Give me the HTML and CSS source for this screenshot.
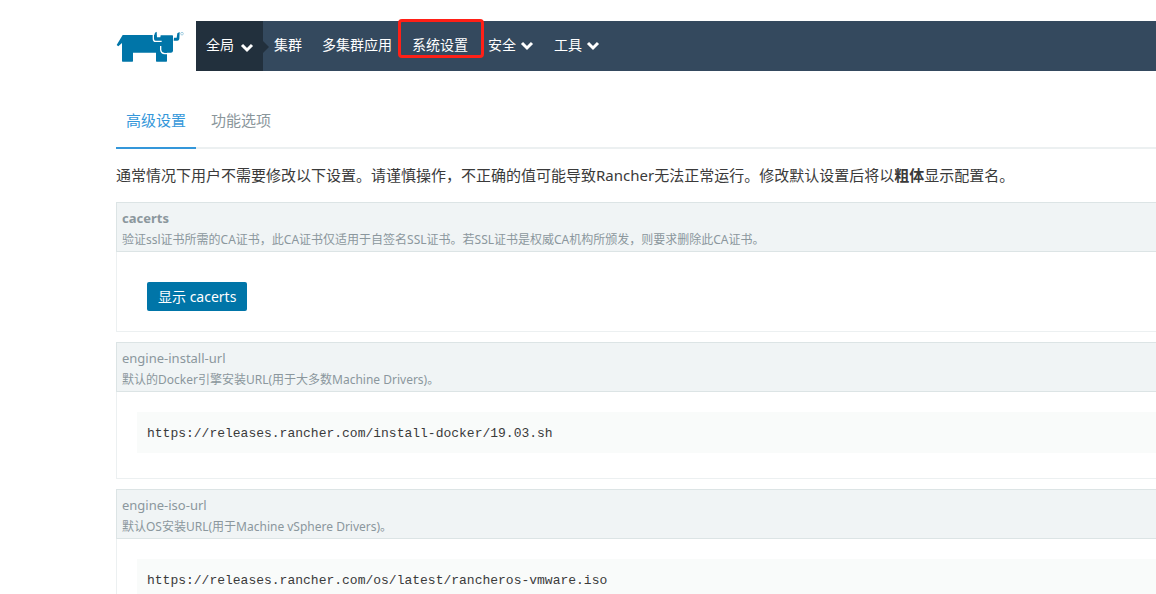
FILE: index.html
```
<!DOCTYPE html>
<html lang="zh-CN">
<head>
    <meta charset="UTF-8">
    <meta name="viewport" content="width=device-width, initial-scale=1.0">
    <title>Rancher - 系统设置</title>
    <link rel="stylesheet" href="styles.css">
</head>
<body>
    <header class="header">
        <a class="logo" href="#" aria-label="Rancher">
            <svg width="68" height="34" viewBox="30 45 204 102">
                <path fill="#0075a8" d="M50 60H145L147 53L152 50L153 67H163L164 61H199Q201 61 201 64V108Q200 113 195 113H183V138Q183 140 181 140H152Q150 140 150 138V113H81V138Q81 140 79 140H50Q48 140 48 138V84L37 94L32 90Z"/>
                <path fill="none" stroke="#fff" stroke-width="4" d="M142 55V71Q142 79 149 79H167M164 93V104Q165 115 176 116H184"/>
                <path fill="#0075a8" d="M204 68H212L214 55L221 51L220 72Q219 77 214 77H203Z"/>
                <circle cx="228" cy="56" r="4" fill="none" stroke="#7fb9d4" stroke-width="2"/>
            </svg>
        </a>
        <nav class="nav">
            <a class="nav-item scope" href="#">全局
                <svg class="chevron" width="14" height="10" viewBox="0 0 14 10"><path d="M2 2l5 5 5-5"/></svg>
            </a>
            <a class="nav-item" href="#">集群</a>
            <a class="nav-item" href="#">多集群应用</a>
            <a class="nav-item marked" href="#">系统设置</a>
            <a class="nav-item" href="#">安全
                <svg class="chevron" width="14" height="10" viewBox="0 0 14 10"><path d="M2 2l5 5 5-5"/></svg>
            </a>
            <a class="nav-item" href="#">工具
                <svg class="chevron" width="14" height="10" viewBox="0 0 14 10"><path d="M2 2l5 5 5-5"/></svg>
            </a>
        </nav>
    </header>

    <main class="content">
        <div class="tabs">
            <a class="tab active" href="#">高级设置</a>
            <a class="tab" href="#">功能选项</a>
        </div>

        <p class="intro">通常情况下用户不需要修改以下设置。请谨慎操作，不正确的值可能导致Rancher无法正常运行。修改默认设置后将以<b>粗体</b>显示配置名。</p>

        <section class="setting">
            <div class="setting-head">
                <h2 class="changed">cacerts</h2>
                <p>验证ssl证书所需的CA证书，此CA证书仅适用于自签名SSL证书。若SSL证书是权威CA机构所颁发，则要求删除此CA证书。</p>
            </div>
            <div class="setting-body hidden-value">
                <button type="button" class="btn">显示 cacerts</button>
            </div>
        </section>

        <section class="setting">
            <div class="setting-head">
                <h2>engine-install-url</h2>
                <p>默认的Docker引擎安装URL(用于大多数Machine Drivers)。</p>
            </div>
            <div class="setting-body">
                <pre>https://releases.rancher.com/install-docker/19.03.sh</pre>
            </div>
        </section>

        <section class="setting">
            <div class="setting-head">
                <h2>engine-iso-url</h2>
                <p>默认OS安装URL(用于Machine vSphere Drivers)。</p>
            </div>
            <div class="setting-body">
                <pre>https://releases.rancher.com/os/latest/rancheros-vmware.iso</pre>
            </div>
        </section>
    </main>
</body>
</html>
```
FILE: styles.css
```
* {
    box-sizing: border-box;
}
body {
    margin: 0;
    padding: 21px 0 0 116px;
    background: #fff;
    color: #3a3a3a;
    font-family: "Noto Sans", "Noto Sans CJK SC", sans-serif;
    font-size: 15px;
    height: 100vh;
    overflow: hidden;
}
a {
    text-decoration: none;
}
h2, p, pre {
    margin: 0;
}

/* header */
.header {
    display: flex;
}
.logo {
    width: 80px;
    padding-top: 9px;
}
.nav {
    display: flex;
    flex: 1;
    height: 50px;
    background: #34495e;
}
.nav-item {
    position: relative;
    display: flex;
    align-items: center;
    gap: 4px;
    padding: 0 10px 4px;
    color: #fff;
    font-size: 14px;
    white-space: nowrap;
}
.chevron {
    margin-top: 4px;
    fill: none;
    stroke: #fff;
    stroke-width: 3;
}
.scope {
    gap: 6px;
    margin-right: 1px;
    padding-right: 9px;
    background: #22303d;
}
.scope .chevron {
    margin-top: 8px;
}
.scope::after {
    content: "";
    position: absolute;
    left: 100%;
    top: 20px;
    border: 6px solid transparent;
    border-left-color: #22303d;
    border-right: 0;
}
.marked::after {
    content: "";
    position: absolute;
    top: -2px;
    left: -4px;
    right: -6px;
    height: 33px;
    border: 3px solid #ff2017;
    border-radius: 4px;
}

/* tabs */
.tabs {
    display: flex;
    gap: 5px;
    margin-top: 28px;
    border-bottom: 2px solid #ecf0f1;
}
.tab {
    height: 50px;
    margin-bottom: -2px;
    padding: 0 10px;
    color: #8a969b;
    line-height: 42px;
}
.tab.active {
    border-bottom: 2px solid #3497da;
    color: #3497da;
}

.intro {
    margin: 15px 0 16px;
    line-height: 22px;
    white-space: nowrap;
}

/* settings */
.setting {
    margin-bottom: 10px;
    border: 1px solid #ecf0f1;
    border-top: 0;
    border-right: 0;
}
.setting-head {
    height: 50px;
    margin-left: -1px;
    padding: 5px;
    border: 1px solid #dce4e5;
    border-right: 0;
    background: #f0f4f5;
    color: #8b979d;
}
.setting-head h2 {
    font-size: 13px;
    font-weight: normal;
    line-height: 21px;
}
.setting-head h2.changed {
    font-weight: bold;
}
.setting-head p {
    font-size: 12px;
    line-height: 21px;
    white-space: nowrap;
}
.setting-body {
    padding: 20px 0 25px 20px;
}
.setting-body.hidden-value {
    padding: 30px 30px 20px;
}
.btn {
    display: block;
    height: 29px;
    padding: 0 11px 2px;
    border: 0;
    border-radius: 2px;
    background: #0075a8;
    color: #fff;
    font-family: inherit;
    font-size: 14px;
}
pre {
    padding: 11px 10px 9px;
    background: #f9fbfa;
    font-family: "Liberation Mono", monospace;
    font-size: 13px;
    line-height: 21px;
}
```
